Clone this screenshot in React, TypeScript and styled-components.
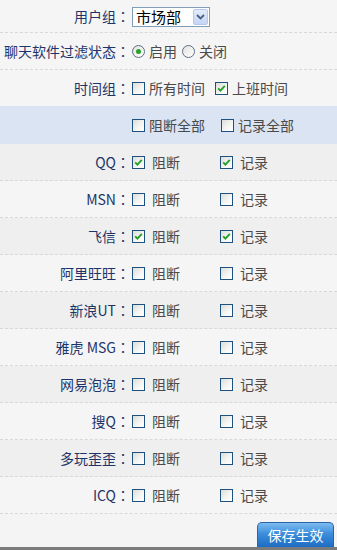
import { FC } from "react";
import styled, { createGlobalStyle } from "styled-components";

const GlobalStyle = createGlobalStyle`
  html, body {
    margin: 0;
    padding: 0;
    background: #f4f4f4;
  }
  body {
    font-family: "Noto Sans CJK SC", "Noto Sans", sans-serif;
    font-size: 14px;
  }
`;

interface Software {
  name: string;
  block: boolean;
  log: boolean;
}

const softwares: Software[] = [
  { name: "QQ", block: true, log: true },
  { name: "MSN", block: false, log: false },
  { name: "飞信", block: true, log: true },
  { name: "阿里旺旺", block: false, log: false },
  { name: "新浪UT", block: false, log: false },
  { name: "雅虎 MSG", block: false, log: false },
  { name: "网易泡泡", block: false, log: false },
  { name: "搜Q", block: false, log: false },
  { name: "多玩歪歪", block: false, log: false },
  { name: "ICQ", block: false, log: false },
];

const CheckBox: FC<{ checked?: boolean }> = ({ checked }) => (
  <Box>
    {checked && (
      <svg width="9" height="9" viewBox="0 0 9 9">
        <path d="M1.2 4.4 L3.4 6.6 L7.8 1.8" fill="none" stroke="#21a121" strokeWidth="1.8" />
      </svg>
    )}
  </Box>
);

const Radio: FC<{ checked?: boolean }> = ({ checked }) => (
  <RadioCircle>{checked && <RadioDot />}</RadioCircle>
);

const FieldLabel: FC<{ text?: string }> = ({ text }) => (
  <Label>
    {text && (
      <>
        {text}
        <Colon>：</Colon>
      </>
    )}
  </Label>
);

const App: FC = () => {
  return (
    <>
      <GlobalStyle />
      <Page>
        <Row $height={32}>
          <FieldLabel text="用户组" />
          <Field>
            <Select>
              <SelectText>市场部</SelectText>
              <SelectArrow>
                <svg width="9" height="6" viewBox="0 0 9 6">
                  <path d="M1 1 L4.5 4.5 L8 1" fill="none" stroke="#4d6185" strokeWidth="1.8" />
                </svg>
              </SelectArrow>
            </Select>
          </Field>
        </Row>
        <Row $height={36}>
          <FieldLabel text="聊天软件过滤状态" />
          <Field>
            <Option $gap={4}>
              <Radio checked />
              启用
            </Option>
            <Option $gap={4} $ml={5}>
              <Radio />
              关闭
            </Option>
          </Field>
        </Row>
        <Row $height={36}>
          <FieldLabel text="时间组" />
          <Field>
            <Option $gap={4}>
              <CheckBox />
              所有时间
            </Option>
            <Option $gap={4} $ml={10}>
              <CheckBox checked />
              上班时间
            </Option>
          </Field>
        </Row>
        <HeaderRow>
          <FieldLabel />
          <Field>
            <Option $gap={4} $width={89}>
              <CheckBox />
              阻断全部
            </Option>
            <Option $gap={4}>
              <CheckBox />
              记录全部
            </Option>
          </Field>
        </HeaderRow>
        {softwares.map((s, i) => (
          <Row key={s.name} $height={36} $dark={i % 2 === 0}>
            <FieldLabel text={s.name} />
            <Field>
              <Option $gap={7} $width={88}>
                <CheckBox checked={s.block} />
                阻断
              </Option>
              <Option $gap={7}>
                <CheckBox checked={s.log} />
                记录
              </Option>
            </Field>
          </Row>
        ))}
        <Footer>
          <SaveButton>保存生效</SaveButton>
        </Footer>
      </Page>
    </>
  );
};

export default App;

const Page = styled.div`
  width: 337px;
  height: 550px;
  display: flex;
  flex-direction: column;
  background: #f4f4f4;
  overflow: hidden;
`;

const Row = styled.div<{ $height: number; $dark?: boolean }>`
  display: flex;
  align-items: center;
  height: ${(p) => p.$height}px;
  flex-shrink: 0;
  border-bottom: 1px dashed #d8d8d8;
  background: ${(p) => (p.$dark ? "#efefef" : "#f5f5f5")};
`;

const HeaderRow = styled.div`
  display: flex;
  align-items: center;
  height: 38px;
  flex-shrink: 0;
  margin-top: -1px;
  background: #dae4f2;
`;

const Label = styled.div`
  width: 130px;
  flex-shrink: 0;
  text-align: right;
  color: #1e3468;
  white-space: nowrap;
  line-height: 1;
`;

const Colon = styled.span`
  font-family: "Noto Sans CJK TC", "Noto Sans CJK SC", sans-serif;
`;

const Field = styled.div`
  display: flex;
  align-items: center;
  padding-left: 2px;
  color: #4a4a4a;
`;

const Option = styled.label<{ $gap: number; $width?: number; $ml?: number }>`
  display: flex;
  align-items: center;
  gap: ${(p) => p.$gap}px;
  width: ${(p) => (p.$width ? `${p.$width}px` : "auto")};
  margin-left: ${(p) => p.$ml ?? 0}px;
  line-height: 1;
  white-space: nowrap;
`;

const Box = styled.span`
  box-sizing: border-box;
  width: 13px;
  height: 13px;
  display: inline-flex;
  align-items: center;
  justify-content: center;
  border: 1px solid #1c5180;
  background: linear-gradient(135deg, #dcdcd7 0%, #f6f6f4 60%, #ffffff 100%);
`;

const RadioCircle = styled.span`
  box-sizing: border-box;
  width: 13px;
  height: 13px;
  border-radius: 50%;
  display: inline-flex;
  align-items: center;
  justify-content: center;
  border: 1px solid #5d7086;
  background: linear-gradient(135deg, #e2e2de 0%, #ffffff 100%);
`;

const RadioDot = styled.span`
  width: 5px;
  height: 5px;
  border-radius: 50%;
  background: #2aa22a;
`;

const Select = styled.div`
  box-sizing: border-box;
  width: 78px;
  height: 20px;
  margin-top: 1px;
  display: flex;
  align-items: center;
  justify-content: space-between;
  border: 1px solid #7f9db9;
  background: #fff;
  padding: 0 1px 0 3px;
`;

const SelectText = styled.span`
  color: #000;
  font-size: 15px;
  line-height: 1;
`;

const SelectArrow = styled.span`
  box-sizing: border-box;
  width: 15px;
  height: 16px;
  display: flex;
  align-items: center;
  justify-content: center;
  border: 1px solid #b6c8ea;
  border-radius: 2px;
  background: linear-gradient(180deg, #e4ecfc 0%, #c5d5f5 100%);
`;

const Footer = styled.div`
  flex: 1;
  display: flex;
  align-items: flex-end;
  justify-content: flex-end;
  padding-right: 3px;
  border-bottom: 3px solid #7b7b7b;
`;

const SaveButton = styled.button`
  box-sizing: border-box;
  width: 77px;
  height: 25px;
  border: 1px solid #2b62a8;
  border-bottom: none;
  border-radius: 5px 5px 0 0;
  background: linear-gradient(180deg, #7cbcf0 0%, #3d8ddc 45%, #1d6cc4 100%);
  color: #fff;
  font-family: "Noto Sans CJK SC", "Noto Sans", sans-serif;
  font-size: 14px;
  line-height: 1;
  padding: 0;
`;
